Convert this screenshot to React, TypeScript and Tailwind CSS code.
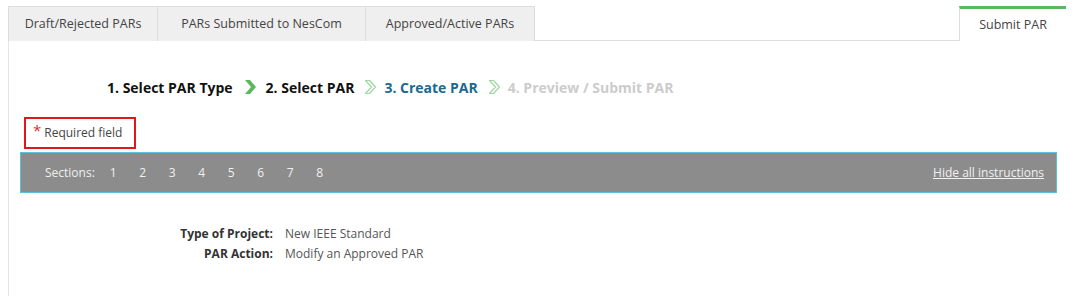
import React from "react";

function SolidChevron() {
  return (
    <svg width="13" height="16" viewBox="0 0 13 16" className="shrink-0">
      <path d="M1 1 H6 L12 8 L6 15 H1 L7 8 Z" fill="#5cb85c" />
    </svg>
  );
}

function OutlineChevron() {
  return (
    <svg width="13" height="16" viewBox="0 0 13 16" className="shrink-0">
      <path d="M1.5 1.5 H5.5 L11.5 8 L5.5 14.5 H1.5 L7.5 8 Z" fill="none" stroke="#9fd89f" strokeWidth="1.2" strokeLinejoin="round" />
    </svg>
  );
}

export default function App() {
  const sections = ["1", "2", "3", "4", "5", "6", "7", "8"];
  return (
    <div className="w-[1075px] h-[296px] bg-white overflow-hidden" style={{ fontFamily: '"Open Sans", "Noto Sans", sans-serif' }}>
      <div className="pl-[8px] pr-[9px] pt-[6px]">
        {/* Tabs */}
        <div className="flex h-[35px]">
          <div className="w-[150px] bg-[#efefef] border border-[#dddddd] border-b-0 flex items-center justify-center text-[12.5px] text-[#444] pt-[1px]">Draft/Rejected PARs</div>
          <div className="w-[208px] bg-[#efefef] border border-[#dddddd] border-l-0 border-b-0 flex items-center justify-center text-[12.5px] text-[#444] pt-[1px]">PARs Submitted to NesCom</div>
          <div className="w-[169px] bg-[#efefef] border border-[#dddddd] border-l-0 border-b-0 flex items-center justify-center text-[12.5px] text-[#444] pt-[1px]">Approved/Active PARs</div>
          <div className="flex-1 border-b border-[#dddddd]" />
          <div className="w-[107px] bg-white border-t-[3px] border-t-[#5cb85c] border-l border-l-[#dddddd] flex items-center justify-center text-[12.5px] text-[#444]">Submit PAR</div>
        </div>
        {/* Content */}
        <div className="border-l border-[#e5e5e5] h-[260px] pl-[11px] pr-[1px]">
          <div className="flex items-center pl-[87px] pt-[33px] h-[59px] text-[14px] font-bold">
            <span className="text-[#111]">1. Select PAR Type</span>
            <span className="ml-[11px] mr-[9px] flex"><SolidChevron /></span>
            <span className="text-[#111]">2. Select PAR</span>
            <span className="ml-[10px] mr-[7px] flex"><OutlineChevron /></span>
            <span className="text-[#1b6a8e]">3. Create PAR</span>
            <span className="ml-[10px] mr-[7px] flex"><OutlineChevron /></span>
            <span className="text-[#cccccc]">4. Preview / Submit PAR</span>
          </div>
          <div className="pt-[17px] pl-[4px]">
            <div className="inline-flex items-center w-[112px] h-[32px] border-2 border-[#e2161d] pl-[7px] text-[12px] text-[#444]">
              <span className="text-[#d9303a] text-[15px] mr-[3px] -mt-[5px]">*</span>
              <span>Required field</span>
            </div>
          </div>
          <div className="mt-[3px] h-[41px] bg-[#8c8c8c] border border-[#5bc0de] flex items-center justify-between pl-[24px] pr-[12px] text-[12px] text-[#f0f0f0] w-[1037px]">
            <div className="flex items-center">
              <span className="mr-[15px]">Sections:</span>
              {sections.map((s) => (
                <span key={s} className="w-[29.5px]">{s}</span>
              ))}
            </div>
            <span className="underline">Hide all instructions</span>
          </div>
          <div className="pt-[31px] text-[12px] leading-[20px]">
            <div className="flex">
              <span className="w-[253px] text-right font-bold text-[#333]">Type of Project:</span>
              <span className="ml-[12px] text-[#555]">New IEEE Standard</span>
            </div>
            <div className="flex">
              <span className="w-[253px] text-right font-bold text-[#333]">PAR Action:</span>
              <span className="ml-[12px] text-[#555]">Modify an Approved PAR</span>
            </div>
          </div>
        </div>
      </div>
    </div>
  );
}
